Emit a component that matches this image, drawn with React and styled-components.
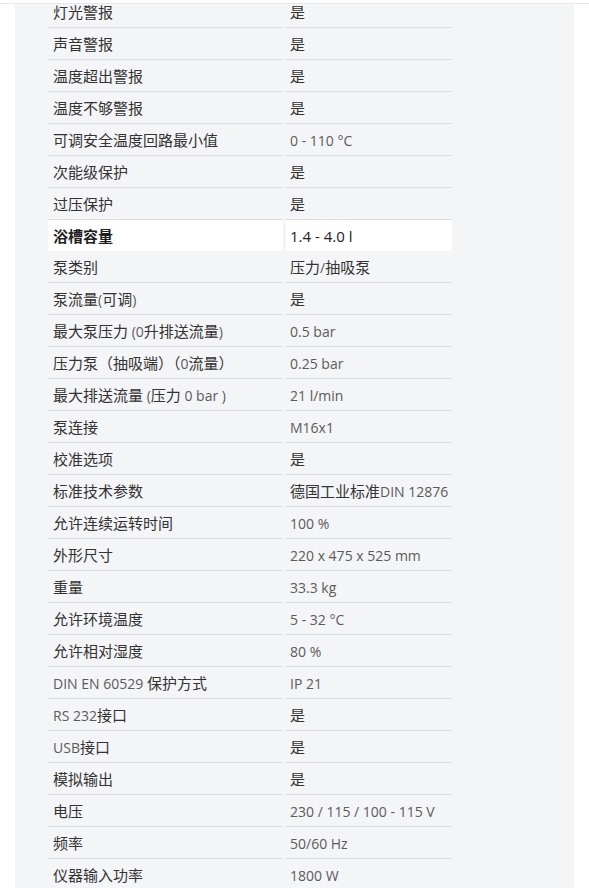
import React from 'react';
import styled, { createGlobalStyle } from 'styled-components';

const GlobalStyle = createGlobalStyle`
    * {
        box-sizing: border-box;
    }
    body {
        margin: 0;
        background: #ffffff;
        font-family: "Open Sans", "Noto Sans CJK SC", sans-serif;
    }
`;

const TopBar = styled.div`
    height: 4px;
    background: #ffffff;
    border-bottom: 1px solid #e6e7ea;
`;

const Panel = styled.div`
    margin: 0 15px;
    height: 884px;
    padding-left: 30px;
    background: #f4f5f7;
    overflow: hidden;
`;

const SpecTable = styled.table`
    margin-top: -8px;
    border-collapse: separate;
    border-spacing: 3px 0;
    table-layout: fixed;
`;

const Row = styled.tr`
    background: ${(p) => (p.$highlight ? '#ffffff' : 'transparent')};
`;

const Cell = styled.td`
    width: ${(p) => (p.$value ? '166px' : '235px')};
    height: ${(p) => (p.$highlight ? '31px' : '32px')};
    padding: 0 0 0 ${(p) => (p.$value ? '4px' : '5px')};
    border-bottom: ${(p) => (p.$highlight ? 'none' : '1px solid #dcdee4')};
    font-family: "Noto Sans CJK SC", "Open Sans", sans-serif;
    font-size: 15px;
    font-weight: ${(p) => (p.$highlight && !p.$value ? 700 : 400)};
    color: ${(p) => (p.$highlight ? '#1f1f1f' : '#333333')};
    white-space: nowrap;
    vertical-align: middle;
    line-height: 1;
`;

const Latin = styled.span`
    font-family: "Open Sans", sans-serif;
    font-size: ${(p) => (p.$strong ? '15px' : '14px')};
    color: ${(p) => (p.$strong ? '#222222' : '#5b5b5b')};
`;

const specs = [
    ['灯光警报', '是'],
    ['声音警报', '是'],
    ['温度超出警报', '是'],
    ['温度不够警报', '是'],
    ['可调安全温度回路最小值', '0 - 110 °C'],
    ['次能级保护', '是'],
    ['过压保护', '是'],
    ['浴槽容量', '1.4 - 4.0 l', true],
    ['泵类别', '压力/抽吸泵'],
    ['泵流量(可调)', '是'],
    ['最大泵压力 (0升排送流量)', '0.5 bar'],
    ['压力泵（抽吸端）（0流量）', '0.25 bar'],
    ['最大排送流量 (压力 0 bar )', '21 l/min'],
    ['泵连接', 'M16x1'],
    ['校准选项', '是'],
    ['标准技术参数', '德国工业标准DIN 12876'],
    ['允许连续运转时间', '100 %'],
    ['外形尺寸', '220 x 475 x 525 mm'],
    ['重量', '33.3 kg'],
    ['允许环境温度', '5 - 32 °C'],
    ['允许相对湿度', '80 %'],
    ['DIN EN 60529 保护方式', 'IP 21'],
    ['RS 232接口', '是'],
    ['USB接口', '是'],
    ['模拟输出', '是'],
    ['电压', '230 / 115 / 100 - 115 V'],
    ['频率', '50/60 Hz'],
    ['仪器输入功率', '1800 W'],
];

// wrap latin runs so they get the lighter western font
const mixed = (text, strong) =>
    text.split(/([\x20-\x7e°]+)/).map((part, i) =>
        /^[\x20-\x7e°]+$/.test(part) && /[^ ]/.test(part) ? (
            <Latin key={i} $strong={strong}>
                {part}
            </Latin>
        ) : (
            part
        )
    );

const App = () => {
    return (
        <>
            <GlobalStyle />
            <TopBar />
            <Panel>
                <SpecTable>
                    <tbody>
                        {specs.map(([label, value, highlight]) => (
                            <Row key={label} $highlight={highlight}>
                                <Cell $highlight={highlight}>{mixed(label, highlight)}</Cell>
                                <Cell $value $highlight={highlight}>
                                    {mixed(value, highlight)}
                                </Cell>
                            </Row>
                        ))}
                    </tbody>
                </SpecTable>
            </Panel>
        </>
    );
};

export default App;
